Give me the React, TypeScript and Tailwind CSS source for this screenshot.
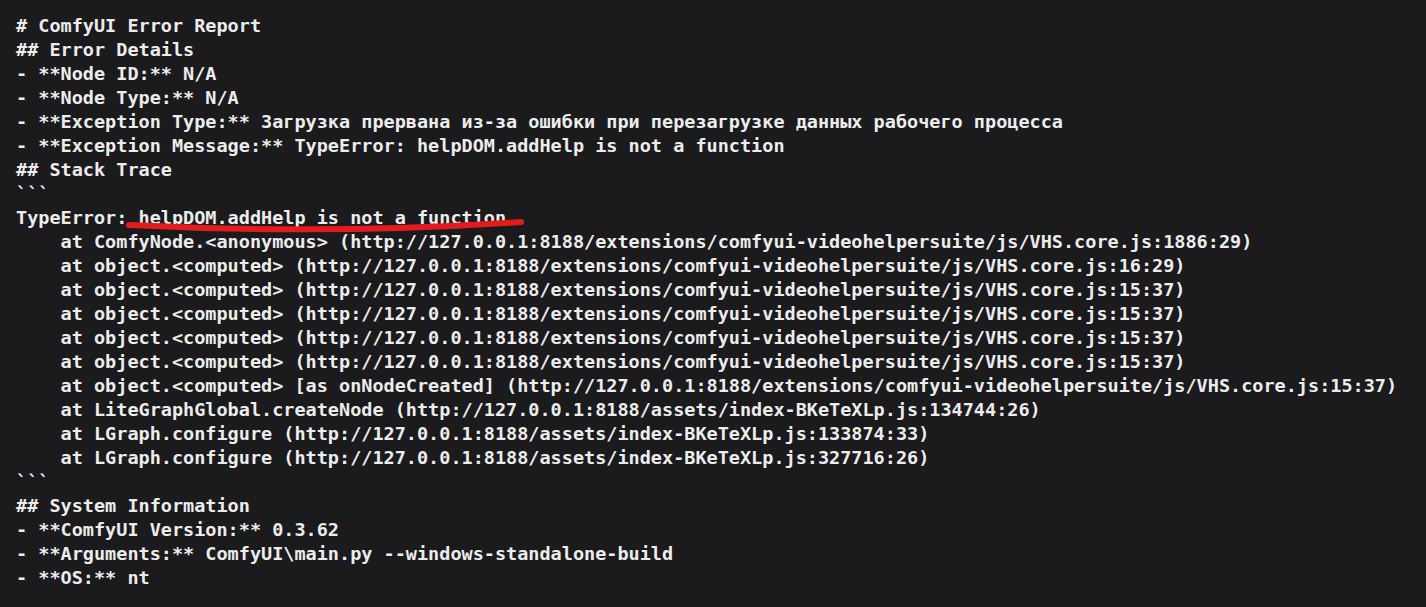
const lines = [
  '# ComfyUI Error Report',
  '## Error Details',
  '- **Node ID:** N/A',
  '- **Node Type:** N/A',
  '- **Exception Type:** Загрузка прервана из-за ошибки при перезагрузке данных рабочего процесса',
  '- **Exception Message:** TypeError: helpDOM.addHelp is not a function',
  '## Stack Trace',
  '```',
  'TypeError: helpDOM.addHelp is not a function',
  '    at ComfyNode.<anonymous> (http://127.0.0.1:8188/extensions/comfyui-videohelpersuite/js/VHS.core.js:1886:29)',
  '    at object.<computed> (http://127.0.0.1:8188/extensions/comfyui-videohelpersuite/js/VHS.core.js:16:29)',
  '    at object.<computed> (http://127.0.0.1:8188/extensions/comfyui-videohelpersuite/js/VHS.core.js:15:37)',
  '    at object.<computed> (http://127.0.0.1:8188/extensions/comfyui-videohelpersuite/js/VHS.core.js:15:37)',
  '    at object.<computed> (http://127.0.0.1:8188/extensions/comfyui-videohelpersuite/js/VHS.core.js:15:37)',
  '    at object.<computed> (http://127.0.0.1:8188/extensions/comfyui-videohelpersuite/js/VHS.core.js:15:37)',
  '    at object.<computed> [as onNodeCreated] (http://127.0.0.1:8188/extensions/comfyui-videohelpersuite/js/VHS.core.js:15:37)',
  '    at LiteGraphGlobal.createNode (http://127.0.0.1:8188/assets/index-BKeTeXLp.js:134744:26)',
  '    at LGraph.configure (http://127.0.0.1:8188/assets/index-BKeTeXLp.js:133874:33)',
  '    at LGraph.configure (http://127.0.0.1:8188/assets/index-BKeTeXLp.js:327716:26)',
  '```',
  '## System Information',
  '- **ComfyUI Version:** 0.3.62',
  '- **Arguments:** ComfyUI\\main.py --windows-standalone-build',
  '- **OS:** nt',
];

export default function App() {
  return (
    <div className="relative w-[1426px] h-[607px] overflow-hidden bg-[#1b1b1d]">
      <pre className="pt-[14px] pl-4 font-['DejaVu_Sans_Mono','Liberation_Mono',monospace] text-[18.5px] leading-[24px] font-semibold text-[#ececec] whitespace-pre">
        {lines.join('\n')}
      </pre>
      {/* red marker stroke under the error message */}
      <svg className="absolute left-0 top-0" width="1426" height="607">
        <path
          d="M129 225 Q 330 235 521 222"
          stroke="#e21c1c"
          strokeWidth="6"
          strokeLinecap="round"
          fill="none"
        />
      </svg>
    </div>
  );
}
